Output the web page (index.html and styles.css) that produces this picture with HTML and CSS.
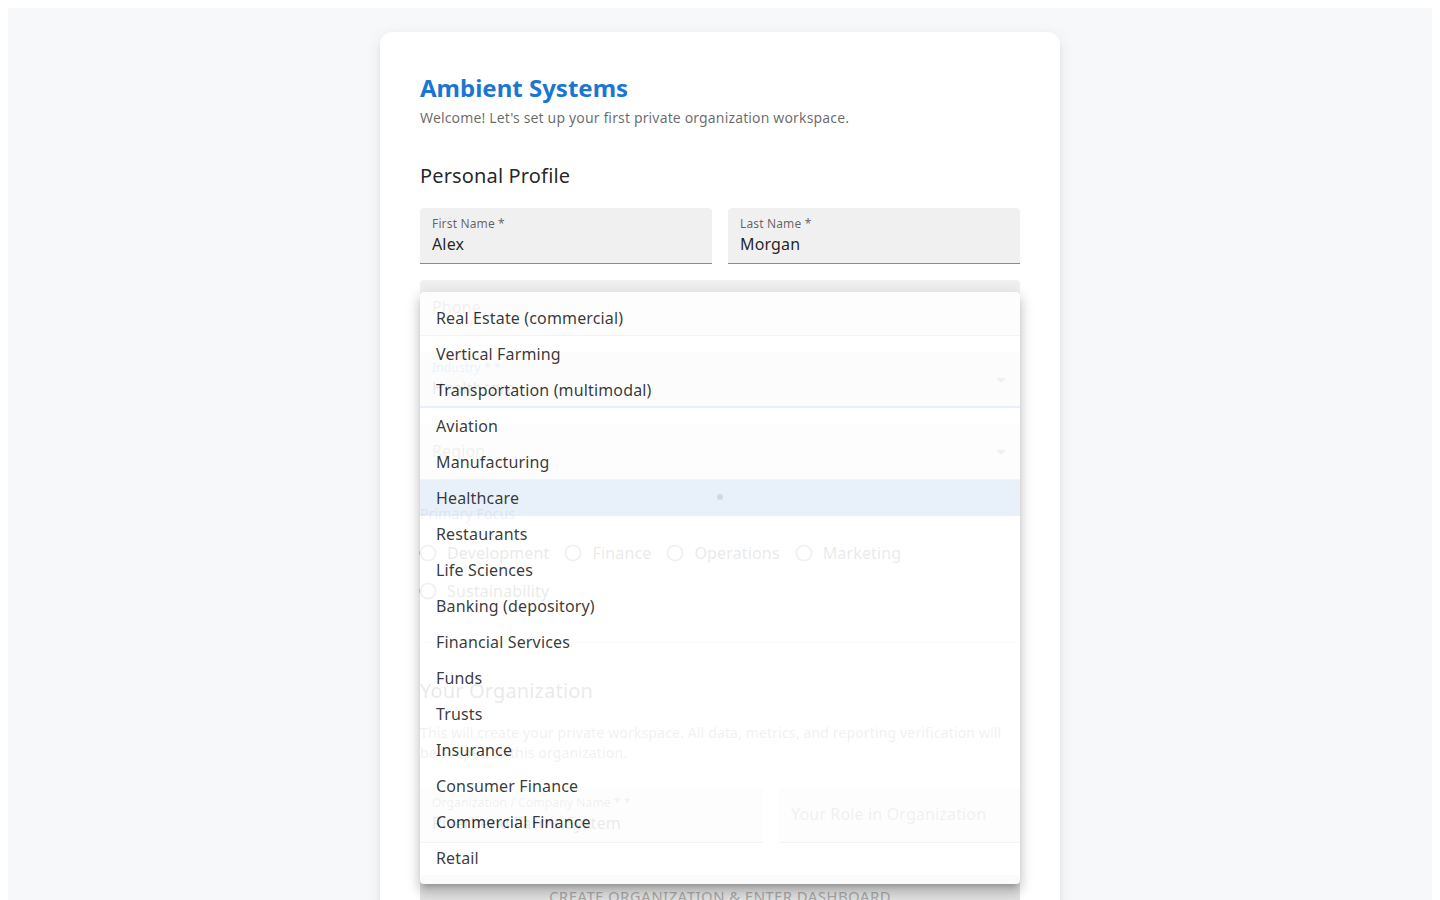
FILE: index.html
```html
<!DOCTYPE html>
<html lang="en">
<head>
<meta charset="utf-8">
<title>Ambient Systems – Setup</title>
<link rel="stylesheet" href="styles.css">
</head>
<body>
<div class="page">
  <div class="card">
    <h1 class="brand">Ambient Systems</h1>
    <p class="subtitle">Welcome! Let's set up your first private organization workspace.</p>

    <h2 class="section-title">Personal Profile</h2>
    <div class="stack">
      <div class="row two">
        <div class="field filled">
          <span class="label">First Name *</span>
          <span class="value">Alex</span>
        </div>
        <div class="field filled">
          <span class="label">Last Name *</span>
          <span class="value">Morgan</span>
        </div>
      </div>
      <div class="field">
        <span class="label big">Phone</span>
      </div>
      <div class="field filled focused select">
        <span class="label">Industry * *</span>
        <span class="value">Healthcare</span>
        <svg class="arrow" viewBox="0 0 24 24"><path d="M7 10l5 5 5-5z"/></svg>
      </div>
      <div class="field select">
        <span class="label big">Region</span>
        <svg class="arrow" viewBox="0 0 24 24"><path d="M7 10l5 5 5-5z"/></svg>
      </div>
    </div>

    <div class="dot-row"><span class="dot"></span></div>

    <div class="focus-label">Primary Focus</div>
    <div class="radio-group">
      <label class="radio"><svg class="radio-icon" viewBox="0 0 24 24"><path d="M12 2C6.48 2 2 6.48 2 12s4.48 10 10 10 10-4.48 10-10S17.52 2 12 2zm0 18c-4.42 0-8-3.58-8-8s3.58-8 8-8 8 3.58 8 8-3.58 8-8 8z"/></svg><span>Development</span></label>
      <label class="radio"><svg class="radio-icon" viewBox="0 0 24 24"><path d="M12 2C6.48 2 2 6.48 2 12s4.48 10 10 10 10-4.48 10-10S17.52 2 12 2zm0 18c-4.42 0-8-3.58-8-8s3.58-8 8-8 8 3.58 8 8-3.58 8-8 8z"/></svg><span>Finance</span></label>
      <label class="radio"><svg class="radio-icon" viewBox="0 0 24 24"><path d="M12 2C6.48 2 2 6.48 2 12s4.48 10 10 10 10-4.48 10-10S17.52 2 12 2zm0 18c-4.42 0-8-3.58-8-8s3.58-8 8-8 8 3.58 8 8-3.58 8-8 8z"/></svg><span>Operations</span></label>
      <label class="radio"><svg class="radio-icon" viewBox="0 0 24 24"><path d="M12 2C6.48 2 2 6.48 2 12s4.48 10 10 10 10-4.48 10-10S17.52 2 12 2zm0 18c-4.42 0-8-3.58-8-8s3.58-8 8-8 8 3.58 8 8-3.58 8-8 8z"/></svg><span>Marketing</span></label>
      <label class="radio"><svg class="radio-icon" viewBox="0 0 24 24"><path d="M12 2C6.48 2 2 6.48 2 12s4.48 10 10 10 10-4.48 10-10S17.52 2 12 2zm0 18c-4.42 0-8-3.58-8-8s3.58-8 8-8 8 3.58 8 8-3.58 8-8 8z"/></svg><span>Sustainability</span></label>
    </div>

    <hr class="divider">

    <h2 class="section-title org-title">Your Organization</h2>
    <p class="desc">This will create your private workspace. All data, metrics, and reporting verification will be scoped to this organization.</p>
    <div class="row org">
      <div class="field filled">
        <span class="label">Organization / Company Name * *</span>
        <span class="value">Riverbend Farms System</span>
      </div>
      <div class="field">
        <span class="label big">Your Role in Organization</span>
      </div>
    </div>

    <button class="submit" disabled>Create Organization &amp; Enter Dashboard</button>

    <ul class="menu">
      <li>Real Estate (commercial)</li>
      <li>Vertical Farming</li>
      <li>Transportation (multimodal)</li>
      <li>Aviation</li>
      <li>Manufacturing</li>
      <li class="selected">Healthcare</li>
      <li>Restaurants</li>
      <li>Life Sciences</li>
      <li>Banking (depository)</li>
      <li>Financial Services</li>
      <li>Funds</li>
      <li>Trusts</li>
      <li>Insurance</li>
      <li>Consumer Finance</li>
      <li>Commercial Finance</li>
      <li>Retail</li>
    </ul>
  </div>
</div>
</body>
</html>
```

FILE: styles.css
```css
body {
  margin: 8px;
  font-family: "Noto Sans", "Open Sans", sans-serif;
  letter-spacing: 0.15px;
  color: rgba(0, 0, 0, 0.87);
  background: #ffffff;
}

.page {
  background: #f7f8fa;
  padding: 24px 0 40px;
  min-height: 900px;
}

.card {
  position: relative;
  width: 600px;
  margin: 0 auto;
  padding: 40px;
  background: #ffffff;
  border-radius: 12px;
  box-shadow: 0 2px 4px rgba(0, 0, 0, 0.06), 0 4px 16px rgba(0, 0, 0, 0.08);
}

.brand {
  margin: 0;
  font-size: 24px;
  line-height: 32px;
  font-weight: 700;
  letter-spacing: 0;
  color: #1976d2;
}

.subtitle {
  margin: 4px 0 0;
  font-size: 14px;
  line-height: 20px;
  color: rgba(0, 0, 0, 0.6);
}

.section-title {
  margin: 32px 0 16px;
  font-size: 20px;
  line-height: 32px;
  font-weight: 400;
  color: rgba(0, 0, 0, 0.87);
}

.stack {
  display: flex;
  flex-direction: column;
  gap: 16px;
}

.row {
  display: grid;
  gap: 16px;
}

.row.two {
  grid-template-columns: 1fr 1fr;
}

.row.org {
  grid-template-columns: 343px 1fr;
}

.field {
  position: relative;
  height: 56px;
  box-sizing: border-box;
  background: rgba(0, 0, 0, 0.06);
  border-radius: 4px 4px 0 0;
  border-bottom: 1px solid rgba(0, 0, 0, 0.42);
}

.field.focused {
  background: rgba(0, 0, 0, 0.09);
  border-bottom: 2px solid #1976d2;
}

.label {
  position: absolute;
  left: 12px;
  top: 7px;
  font-size: 12px;
  line-height: 17px;
  color: rgba(0, 0, 0, 0.6);
  white-space: nowrap;
}

.label.big {
  top: 16px;
  font-size: 16px;
  line-height: 23px;
}

.focused .label {
  color: #1976d2;
}

.value {
  position: absolute;
  left: 12px;
  top: 25px;
  font-size: 16px;
  line-height: 23px;
  color: rgba(0, 0, 0, 0.87);
  white-space: nowrap;
}

.arrow {
  position: absolute;
  right: 7px;
  top: 16px;
  width: 24px;
  height: 24px;
  fill: rgba(0, 0, 0, 0.54);
}

.dot-row {
  height: 24px;
  display: flex;
  justify-content: center;
  align-items: flex-start;
  padding-top: 14px;
  box-sizing: border-box;
}

.dot {
  width: 6px;
  height: 6px;
  border-radius: 50%;
  background: #000000;
}

.focus-label {
  font-size: 14px;
  line-height: 20px;
  color: rgba(0, 0, 0, 0.6);
  margin-bottom: 10px;
}

.radio-group {
  display: flex;
  flex-wrap: wrap;
}

.radio {
  display: flex;
  align-items: center;
  height: 38px;
  margin-left: -11px;
  margin-right: 16px;
  font-size: 16px;
  line-height: 24px;
  color: rgba(0, 0, 0, 0.87);
}

.radio-icon {
  width: 20px;
  height: 20px;
  padding: 9px;
  fill: rgba(0, 0, 0, 0.6);
}

.divider {
  margin: 32px 0;
  border: none;
  border-top: 1px solid rgba(0, 0, 0, 0.12);
}

.org-title {
  margin-top: 0;
}

.desc {
  margin: 0 0 24px;
  font-size: 14px;
  line-height: 20px;
  color: rgba(0, 0, 0, 0.6);
}

.submit {
  display: block;
  width: 100%;
  height: 42px;
  margin-top: 32px;
  border: none;
  border-radius: 4px;
  background: rgba(0, 0, 0, 0.12);
  color: rgba(0, 0, 0, 0.26);
  font-family: inherit;
  font-size: 15px;
  font-weight: 500;
  letter-spacing: 0.3px;
  text-transform: uppercase;
}

.menu {
  position: absolute;
  left: 40px;
  top: 260px;
  width: 600px;
  margin: 0;
  padding: 8px 0;
  list-style: none;
  background: #ffffff;
  border-radius: 4px;
  opacity: 0.9;
  box-shadow: 0 5px 5px -3px rgba(0, 0, 0, 0.2), 0 8px 10px 1px rgba(0, 0, 0, 0.14), 0 3px 14px 2px rgba(0, 0, 0, 0.12);
}

.menu li {
  padding: 6px 16px;
  font-size: 16px;
  line-height: 24px;
  color: rgba(0, 0, 0, 0.87);
}

.menu li.selected {
  background: rgba(25, 118, 210, 0.11);
}
```
